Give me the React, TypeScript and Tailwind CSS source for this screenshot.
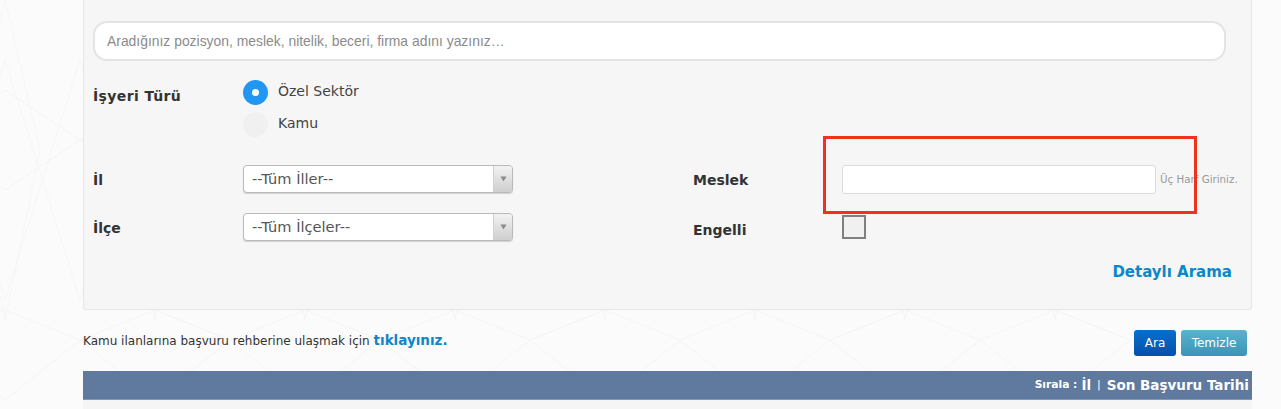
import React from 'react'

// faint line pattern behind the page
function BackgroundPattern() {
  const tiles = [0, 1, 2, 3, 4, 5, 6, 7]
  return (
    <svg className="absolute inset-0 h-full w-full" viewBox="0 0 1281 409" fill="none" stroke="#f5f5f6" strokeWidth="1">
      {tiles.map(i => (
        <g key={i} transform={`translate(${i * 150 - 70} 0)`}>
          <path d="M0 60 L75 300 L150 60 M0 300 L75 60 L150 300" />
          <path d="M0 340 L75 310 L150 340 L75 400 Z" />
          <path d="M0 140 L75 90 L150 140 L75 190 Z" />
          <path d="M75 0 L40 150 L75 320 L110 150 Z" />
        </g>
      ))}
    </svg>
  )
}

function FieldLabel({ children, wide }: { children: React.ReactNode; wide?: boolean }) {
  return (
    <span className={wide ? 'text-[14px] font-bold leading-none tracking-[0.4px] text-[#333]' : 'text-[14px] font-bold leading-none text-[#333]'}>
      {children}
    </span>
  )
}

function SelectBox({ value }: { value: string }) {
  return (
    <div className="flex h-[28px] w-[270px] overflow-hidden rounded-[4px] border border-[#b9b9b9] bg-white shadow-[0_1px_1px_rgba(0,0,0,0.15)]">
      <span className="flex-1 whitespace-nowrap pl-[8px] text-[14.6px] leading-[26px] text-[#555]">{value}</span>
      <span className="flex w-[19px] items-center justify-center border-l border-[#d0d0d0] bg-gradient-to-b from-[#f2f2f2] to-[#cfcfcf]">
        <svg width="7" height="6" viewBox="0 0 7 6">
          <path d="M0.5 0.5 H6.5 L3.5 5.5 Z" fill="#8a8a8a" />
        </svg>
      </span>
    </div>
  )
}

export default function App() {
  return (
    <div className="relative h-[409px] w-[1281px] overflow-hidden bg-[#fbfbfb] font-['DejaVu_Sans',sans-serif]">
      <BackgroundPattern />

      <div className="relative ml-[83px] w-[1169px]">
        {/* Search panel */}
        <div className="h-[310px] rounded-b-[3px] border-x border-b border-[#e6e6e6] bg-[#f6f6f6] pl-[9px] pr-[25px] pt-[21px]">
          <div className="flex h-[40px] items-center rounded-[14px] border-2 border-[#e4e4e4] bg-white pl-[12px] font-['Liberation_Sans',sans-serif] text-[13.9px] text-[#8b8b8b]">
            Aradığınız pozisyon, meslek, nitelik, beceri, firma adını yazınız…
          </div>

          <div className="mt-[19px] flex">
            <div className="w-[150px] pt-[4px]">
              <FieldLabel wide>İşyeri Türü</FieldLabel>
            </div>
            <div className="flex flex-col gap-[7px]">
              <div className="flex items-center gap-[10px]">
                <span className="flex h-[25px] w-[25px] items-center justify-center rounded-full bg-[#2196f3]">
                  <span className="h-[7px] w-[7px] rounded-full bg-white" />
                </span>
                <span className="-mt-[3px] text-[14px] text-[#444]">Özel Sektör</span>
              </div>
              <div className="flex items-center gap-[10px]">
                <span className="h-[25px] w-[25px] rounded-full bg-[#f0f0f0]" />
                <span className="-mt-[3px] text-[14px] text-[#444]">Kamu</span>
              </div>
            </div>
          </div>

          <div className="mt-[28px] flex">
            <div className="flex w-[600px] shrink-0 flex-col gap-[20px]">
              <div className="flex items-center">
                <div className="w-[150px] pt-[2px]">
                  <FieldLabel>İl</FieldLabel>
                </div>
                <SelectBox value="--Tüm İller--" />
              </div>
              <div className="flex items-center">
                <div className="w-[150px] pt-[2px]">
                  <FieldLabel>İlçe</FieldLabel>
                </div>
                <SelectBox value="--Tüm İlçeler--" />
              </div>
            </div>

            <div className="flex flex-col">
              <div className="flex items-center">
                <div className="w-[149px] pt-[1px]">
                  <FieldLabel>Meslek</FieldLabel>
                </div>
                <div className="h-[29px] w-[314px] rounded-[3px] border border-[#dcdcdc] bg-white" />
                <span className="ml-[4px] whitespace-nowrap text-[10.3px] text-[#999]">Üç Harf Giriniz.</span>
              </div>
              <div className="mt-[17px] flex items-center">
                <div className="w-[149px] pt-[7px]">
                  <FieldLabel>Engelli</FieldLabel>
                </div>
                <span className="h-[24px] w-[24px] border-2 border-[#808080] bg-[#f0f0f0]" />
              </div>
            </div>
          </div>

          <div className="mt-[23px] flex justify-end">
            <a className="mr-[-6px] text-[15px] font-bold leading-none text-[#0c87c9]">Detaylı Arama</a>
          </div>
        </div>

        {/* Info line and buttons */}
        <div className="flex h-[61px] items-center justify-between pr-[5px] pt-[4px]">
          <p className="-mt-[4px] text-[12px] text-[#333]">
            Kamu ilanlarına başvuru rehberine ulaşmak için{' '}
            <a className="text-[13.5px] font-bold text-[#0c87c9]">tıklayınız.</a>
          </p>
          <div className="flex gap-[5px]">
            <button className="h-[26px] w-[42px] rounded-[3px] bg-gradient-to-b from-[#0a6fcb] to-[#0450ab] text-[12px] text-white">Ara</button>
            <button className="h-[26px] w-[66px] rounded-[3px] bg-gradient-to-b from-[#5cb2cf] to-[#3a94b4] text-[12px] text-white">Temizle</button>
          </div>
        </div>

        {/* Sort bar */}
        <div className="flex h-[29px] items-center justify-end border-b border-[#7f97b8] bg-[#5f7a9e] pr-[3px] font-bold text-white">
          <span className="text-[10.7px]">Sırala :</span>
          <span className="ml-[4px] text-[13.5px]">İl</span>
          <span className="mx-[6px] text-[11px] font-normal">|</span>
          <span className="text-[13.5px]">Son Başvuru Tarihi</span>
        </div>
        <div className="h-[10px] bg-[#f5f5f5]" />
      </div>

      {/* Red annotation box drawn over the form */}
      <div className="absolute left-[823px] top-[136px] h-[78px] w-[374px] border-[3px] border-[#f0311c]" />
    </div>
  )
}
